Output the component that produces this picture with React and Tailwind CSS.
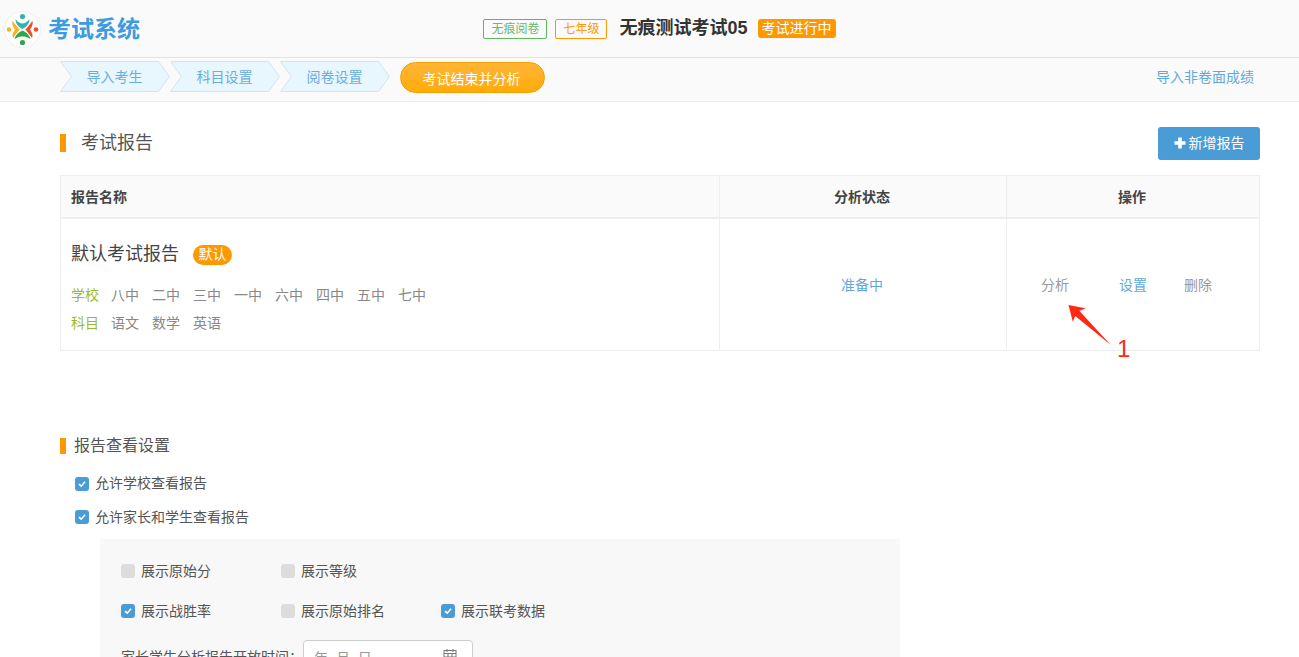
import React from "react";

const FONT = "font-['Liberation_Sans','Noto_Sans_CJK_SC',sans-serif]";

function Logo() {
  return (
    <svg width="37" height="37" viewBox="0 0 37 37" className="shrink-0">
      <circle cx="18.5" cy="18.5" r="18" fill="#fff" stroke="#eeeeee" />
      <circle cx="18.5" cy="5.5" r="2.6" fill="#2fb5ad" />
      <path d="M11.5 8 C14 11.5 16.5 12.5 18.5 12.5 C20.5 12.5 23 11.5 25.5 8 C25.5 13 22 16.5 18.5 18 C15 16.5 11.5 13 11.5 8Z" fill="#2fb5ad" />
      <circle cx="5" cy="18.5" r="2.3" fill="#f9b224" />
      <path d="M8.5 10 L15.5 18.5 L9 27 C7.8 24.5 8.5 22 11 18.5 C8.5 15.5 7.8 12.5 8.5 10Z" fill="#f9b224" />
      <circle cx="32" cy="18.5" r="2.3" fill="#e8522a" />
      <path d="M28.5 10 L21.5 18.5 L28 27 C29.2 24.5 28.5 22 26 18.5 C28.5 15.5 29.2 12.5 28.5 10Z" fill="#e8522a" />
      <circle cx="18.5" cy="31.5" r="2.6" fill="#2aa84a" />
      <path d="M10.5 28 C11.5 24 15 21 18.5 19.5 C22 21 25.5 24 26.5 28 C23 26 21 25.5 18.5 25.5 C16 25.5 14 26 10.5 28Z" fill="#2aa84a" />
    </svg>
  );
}

function Step({ label }) {
  return (
    <div className="relative w-[110px] h-[31px] flex items-center justify-center text-[14px] text-[#6aaedb]">
      <svg width="110" height="31" viewBox="0 0 110 31" className="absolute left-0 top-0">
        <path d="M0.5 0.5 H98.5 L109.5 15.5 L98.5 30.5 H0.5 L11.5 15.5 Z" fill="#e8f6fe" stroke="#d3e4ef" />
      </svg>
      <span className="relative pt-[2px] -ml-[1px]">{label}</span>
    </div>
  );
}

function SectionTitle({ children, gap, size, bar }) {
  return (
    <div className={`flex items-center ${gap} ${size} text-[#555]`}>
      <span className={`w-[6px] ${bar} bg-[#ff9800]`} />
      {children}
    </div>
  );
}

function Check({ on, label, width }) {
  return (
    <label className={`flex items-center gap-[6px] text-[14px] text-[#555] ${width}`}>
      <span className={`w-[14px] h-[14px] rounded-[3px] flex items-center justify-center ${on ? "bg-[#4a9cd6]" : "bg-[#dddddd]"}`}>
        {on && (
          <svg width="8" height="8" viewBox="0 0 8 8">
            <path d="M1 4.2 L3.2 6.2 L7 1.8" fill="none" stroke="#fff" strokeWidth="1.6" />
          </svg>
        )}
      </span>
      {label}
    </label>
  );
}

function Tags({ title, items }) {
  return (
    <div className="flex gap-[13px] h-[28px] items-center text-[14px] text-[#888]">
      <span className="w-[27px] whitespace-nowrap text-[#9bbb2c]">{title}</span>
      {items.map((t) => (
        <span key={t} className="w-[28px] whitespace-nowrap">{t}</span>
      ))}
    </div>
  );
}

export default function App() {
  return (
    <div className={`${FONT} h-[657px] overflow-hidden bg-white`}>
      <header className="h-[58px] bg-[#fafafa] border-b border-[#dde3ea] relative flex items-center justify-center pl-[20px]">
        <div className="absolute left-[4px] top-[11px] flex items-center gap-[7px]">
          <Logo />
          <span className="text-[23px] font-bold text-[#3d9be0] leading-none">考试系统</span>
        </div>
        <div className="flex items-center">
          <span className="h-[20px] w-[64px] border border-[#5cb85c] rounded-[2px] text-[12px] text-[#6db96d] flex items-center justify-center">无痕阅卷</span>
          <span className="ml-[8px] h-[20px] w-[52px] border border-[#ff9800] rounded-[2px] text-[12px] text-[#ff9800] flex items-center justify-center">七年级</span>
          <span className="ml-[12px] text-[18px] font-bold text-[#333]">无痕测试考试05</span>
          <span className="ml-[10px] h-[19px] w-[78px] rounded-[3px] bg-[#ff9800] text-[14px] text-white flex items-center justify-center">考试进行中</span>
        </div>
      </header>

      <nav className="h-[44px] bg-[#fafafa] border-b border-[#eeeeee] flex items-start pt-[3px] pl-[60px] pr-[45px]">
        <Step label="导入考生" />
        <Step label="科目设置" />
        <Step label="阅卷设置" />
        <button className="ml-[10px] mt-[1px] w-[145px] h-[31px] rounded-full border border-[#f0a000] bg-gradient-to-b from-[#ffb534] to-[#ffab00] text-white text-[14px] pt-[3px] pr-[2px]">考试结束并分析</button>
        <a className="ml-auto mt-[6px] text-[14px] text-[#5fa9dc]">导入非卷面成绩</a>
      </nav>

      <main className="pl-[60px] pr-[39px] pt-[24px]">
        <div className="flex items-center justify-between h-[34px]">
          <SectionTitle gap="gap-[15px]" size="text-[18px]" bar="h-[18px]">考试报告</SectionTitle>
          <button className="w-[102px] h-[33px] rounded-[3px] bg-[#4a9cd6] text-white text-[14px] flex items-center justify-center gap-[3px]">
            <svg width="12" height="12" viewBox="0 0 12 12">
              <path d="M4.2 0.5 H7.8 V4.2 H11.5 V7.8 H7.8 V11.5 H4.2 V7.8 H0.5 V4.2 H4.2 Z" fill="#fff" />
            </svg>
            新增报告
          </button>
        </div>

        <table className="mt-[15px] w-[1200px] table-fixed border-collapse border border-[#eeeeee] text-[14px]">
          <thead>
            <tr className="h-[42px] bg-[#fafafa] border-b-2 border-[#eeeeee] font-bold text-[#444]">
              <th className="w-[659px] border-r border-[#eeeeee] text-left pl-[10px] pt-[2px]">报告名称</th>
              <th className="w-[287px] border-r border-[#eeeeee] pt-[2px] pr-[2px]">分析状态</th>
              <th className="pt-[2px] pr-[2px]">操作</th>
            </tr>
          </thead>
          <tbody>
            <tr className="h-[133px]">
              <td className="border-r border-[#eeeeee] pl-[10px] align-top pt-[23px]">
                <div className="flex items-center gap-[14px] h-[26px] mb-[14px]">
                  <span className="text-[18px] text-[#444]">默认考试报告</span>
                  <span className="w-[39px] h-[20px] rounded-full bg-[#ff9800] text-white text-[14px] flex items-center justify-center">默认</span>
                </div>
                <Tags title="学校" items={["八中", "二中", "三中", "一中", "六中", "四中", "五中", "七中"]} />
                <Tags title="科目" items={["语文", "数学", "英语"]} />
              </td>
              <td className="border-r border-[#eeeeee] text-center text-[#5fa9dc] pt-[2px] pr-[2px]">准备中</td>
              <td className="pt-[2px]">
                <div className="flex items-center pl-[34px] text-[#999] gap-[50px]">
                  <span className="relative">
                    分析
                    <svg width="44" height="41" viewBox="0 0 44 41" className="absolute left-[27px] top-[30px]">
                      <path d="M0.5 0 L17.5 3.3 L11.5 6 L42.8 40 L7.2 11 L4.8 16.7 Z" fill="#ff2a14" />
                    </svg>
                  </span>
                  <span className="text-[#5fa9dc]">设置</span>
                  <span className="-ml-[13px]">删除</span>
                </div>
              </td>
            </tr>
          </tbody>
        </table>
        <div className="relative h-0">
          <span className="absolute left-[1057px] -top-[14px] text-[24px] leading-none text-[#ff2a14]">1</span>
        </div>

        <div className="mt-[83px]">
          <SectionTitle gap="gap-[8px]" size="text-[16px]" bar="h-[16px]">报告查看设置</SectionTitle>
        </div>
        <div className="pl-[15px] mt-[9px] flex flex-col">
          <div className="h-[33px] flex items-center"><Check on label="允许学校查看报告" /></div>
          <div className="h-[34px] flex items-center"><Check on label="允许家长和学生查看报告" /></div>
          <div className="ml-[25px] mt-[5px] w-[800px] h-[200px] bg-[#f8f8f8] pl-[21px] pt-[12px]">
            <div className="flex items-center h-[40px]">
              <Check label="展示原始分" width="w-[160px]" />
              <Check label="展示等级" width="w-[160px]" />
            </div>
            <div className="flex items-center h-[40px]">
              <Check on label="展示战胜率" width="w-[160px]" />
              <Check label="展示原始排名" width="w-[160px]" />
              <Check on label="展示联考数据" width="w-[160px]" />
            </div>
            <div className="flex items-start mt-[9px] text-[14px] text-[#555]">
              <span className="pt-[7px] w-[182px] whitespace-nowrap">家长学生分析报告开放时间：</span>
              <div className="w-[170px] h-[34px] bg-white border border-[#cccccc] rounded-[4px] flex items-center justify-between pl-[10px] pr-[15px] pt-[2px] text-[#999]">
                <span className="tracking-[2px]">年 月 日</span>
                <svg width="14" height="14" viewBox="0 0 14 14" className="-mt-[6px]">
                  <rect x="1" y="2.5" width="12" height="10.5" fill="none" stroke="#777" />
                  <path d="M1 5.5 H13 M4 1 V4 M10 1 V4 M5 5.5 V13 M9 5.5 V13 M1 9 H13" stroke="#777" fill="none" />
                </svg>
              </div>
            </div>
          </div>
        </div>
      </main>
    </div>
  );
}
